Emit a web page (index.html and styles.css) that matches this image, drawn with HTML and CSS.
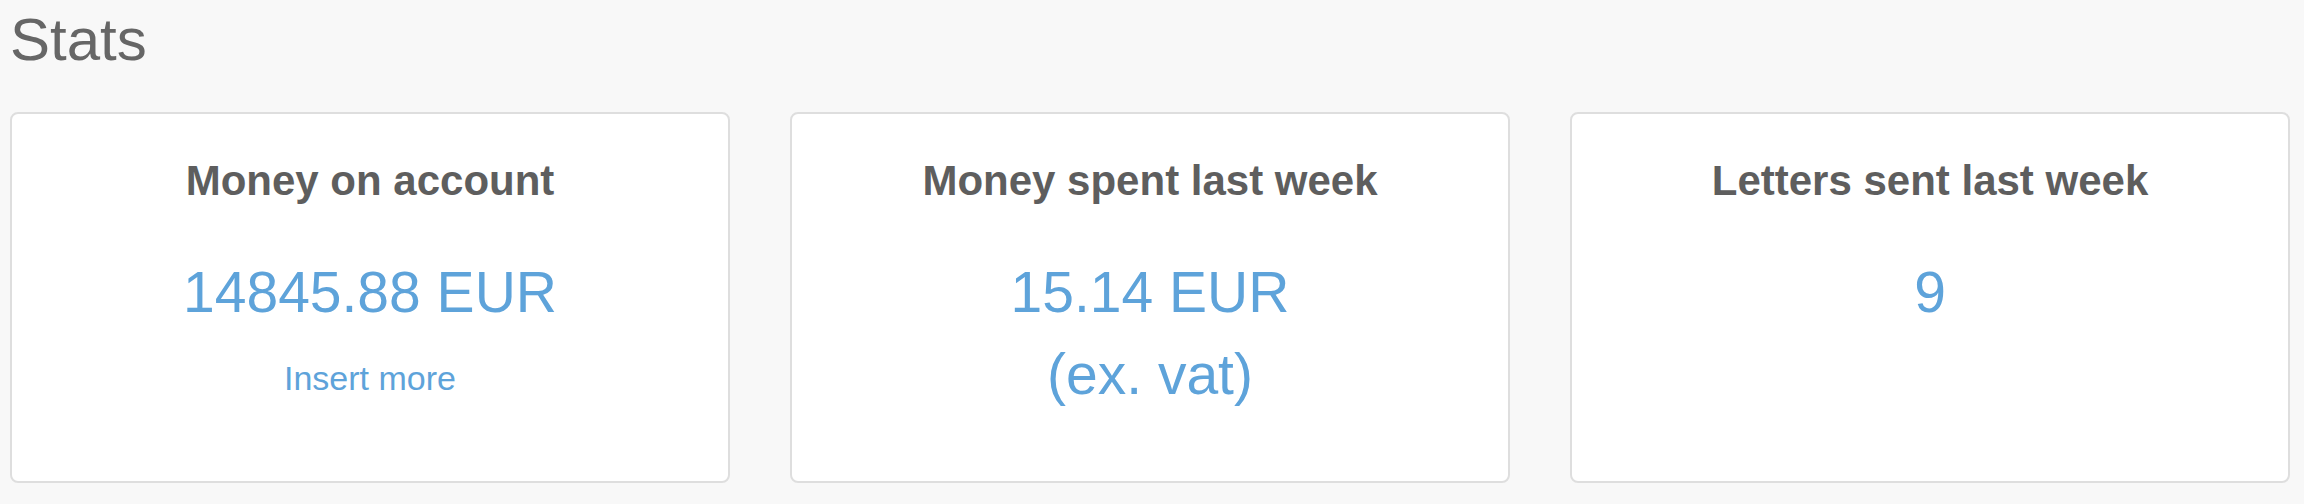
FILE: index.html
```html
<!DOCTYPE html>
<html lang="en">
<head>
<meta charset="utf-8">
<title>Stats</title>
<link rel="stylesheet" href="styles.css">
</head>
<body>
  <main class="page">
    <h1 class="page-title">Stats</h1>
    <section class="stats">
      <div class="stat-card">
        <h2 class="stat-title">Money on account</h2>
        <p class="stat-value">14845.88 EUR</p>
        <a class="stat-link" href="#">Insert more</a>
      </div>
      <div class="stat-card">
        <h2 class="stat-title">Money spent last week</h2>
        <p class="stat-value">15.14 EUR<br>(ex. vat)</p>
      </div>
      <div class="stat-card">
        <h2 class="stat-title">Letters sent last week</h2>
        <p class="stat-value">9</p>
      </div>
    </section>
  </main>
</body>
</html>
```

FILE: styles.css
```css
* {
  box-sizing: border-box;
}

html, body {
  margin: 0;
  padding: 0;
  background: #f8f8f8;
}

body {
  font-family: "Liberation Sans", Arial, Helvetica, sans-serif;
  color: #5e5e5e;
}

.page {
  padding: 7px 14px 0 10px;
}

.page-title {
  margin: 0 0 39px 0;
  font-size: 60px;
  font-weight: normal;
  line-height: 66px;
  color: #666666;
}

.stats {
  display: grid;
  grid-template-columns: repeat(3, 720px);
  column-gap: 60px;
}

.stat-card {
  height: 371px;
  background: #ffffff;
  border: 2px solid #dedede;
  border-radius: 8px;
  padding: 44px 20px 0;
  display: flex;
  flex-direction: column;
  align-items: center;
  text-align: center;
}

.stat-title {
  margin: 0;
  font-size: 42px;
  font-weight: bold;
  line-height: 46px;
  color: #5e5e5e;
}

.stat-value {
  margin: 47px 0 0 0;
  font-size: 57px;
  line-height: 82px;
  color: #5ea3da;
}

.stat-link {
  margin-top: 22px;
  font-size: 34px;
  line-height: 47px;
  color: #5ea3da;
  text-decoration: none;
}
```
